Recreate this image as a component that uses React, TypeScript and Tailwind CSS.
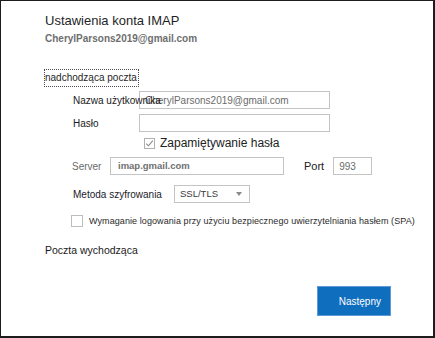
export default function App() {
  return (
    <div className="w-[435px] h-[338px] bg-white border-t border-l border-r-2 border-b-2 border-[#1c1c1c] font-['Liberation_Sans',Arial,sans-serif] flex flex-col pl-[44px] text-[#1f1f1f]">
      <div className="mt-[12px] text-[13px] leading-[16px] whitespace-nowrap">Ustawienia konta IMAP</div>
      <div className="mt-[4px] text-[10px] leading-[12px] font-bold text-[#6e6e6e] whitespace-nowrap">CherylParsons2019@gmail.com</div>

      <div className="mt-[24px] -ml-[1px] self-start h-[18px] flex items-center border border-dotted border-[#4a4a4a] pr-[1px] text-[10px] leading-[12px] whitespace-nowrap">
        nadchodząca poczta
      </div>

      <div className="mt-[4px] h-[18px] flex items-center">
        <span className="ml-[28px] w-[66px] relative z-10 whitespace-nowrap text-[10px] text-[#1a1a1a]">Nazwa użytkownika</span>
        <div className="w-[191px] h-[18px] border border-[#c4c4c4] flex items-center pl-[5px] text-[10px] text-[#6b6b6b] whitespace-nowrap">
          CherylParsons2019@gmail.com
        </div>
      </div>

      <div className="mt-[5px] h-[18px] flex items-center">
        <span className="ml-[28px] w-[66px] whitespace-nowrap text-[10px] text-[#1a1a1a]">Hasło</span>
        <div className="w-[191px] h-[18px] border border-[#c4c4c4]" />
      </div>

      <div className="mt-[5px] h-[12px] flex items-center">
        <div className="ml-[99px] w-[11px] h-[11px] border border-[#b0b0b0] flex items-center justify-center">
          <svg width="9" height="9" viewBox="0 0 9 9">
            <path d="M1.3 4.6 L3.5 6.8 L7.8 1.6" fill="none" stroke="#8a8a8a" strokeWidth="1.1" />
          </svg>
        </div>
        <span className="ml-[5px] text-[12px] leading-[14px] text-[#222] whitespace-nowrap">Zapamiętywanie hasła</span>
      </div>

      <div className="mt-[8px] h-[18px] flex items-center">
        <span className="ml-[27px] w-[38px] text-[10px] text-[#6a6a6a]">Server</span>
        <div className="w-[174px] h-[18px] border border-[#c4c4c4] flex items-center pl-[7px] text-[9.5px] font-bold text-[#707070] whitespace-nowrap">
          imap.gmail.com
        </div>
        <span className="ml-[20px] text-[11px] text-[#222]">Port</span>
        <div className="ml-[9px] w-[39px] h-[18px] border border-[#c4c4c4] flex items-center pl-[5px] text-[10px] text-[#6b6b6b]">
          993
        </div>
      </div>

      <div className="mt-[10px] h-[18px] flex items-center">
        <span className="ml-[28px] w-[101px] text-[10px] text-[#1a1a2a] whitespace-nowrap">Metoda szyfrowania</span>
        <div className="w-[76px] h-[18px] border border-[#c4c4c4] flex items-center pl-[5px] pr-[7px] text-[9.5px] text-[#3a3a3a]">
          <span className="flex-1">SSL/TLS</span>
          <svg width="6" height="4" viewBox="0 0 6 4">
            <path d="M0 0 H6 L3 4 Z" fill="#8a8a8a" />
          </svg>
        </div>
      </div>

      <div className="mt-[12px] h-[12px] flex items-center">
        <div className="ml-[26px] w-[12px] h-[12px] border border-[#bdbdbd]" />
        <span className="ml-[6px] text-[9px] leading-[12px] tracking-[0.08px] text-[#2a2a2a] whitespace-nowrap">
          Wymaganie logowania przy użyciu bezpiecznego uwierzytelniania hasłem (SPA)
        </span>
      </div>

      <div className="mt-[17px] text-[10.5px] leading-[12px] text-[#1a1a1a] whitespace-nowrap">Poczta wychodząca</div>

      <button className="mt-auto mb-[20px] mr-[42px] self-end w-[74px] h-[30px] bg-[#106ebe] border border-[#5e9bd6] flex items-center justify-end pr-[9px] text-[10px] text-white">
        Następny
      </button>
    </div>
  );
}
